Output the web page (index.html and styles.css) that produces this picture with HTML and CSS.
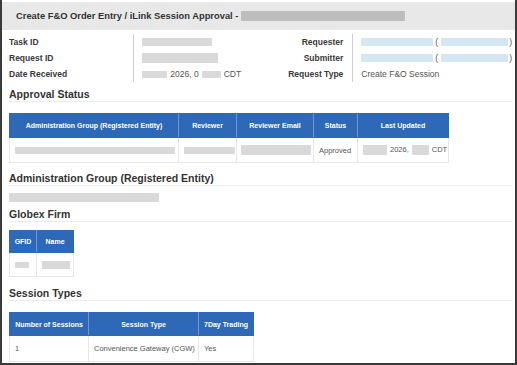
FILE: index.html
```html
<!DOCTYPE html>
<html>
<head>
  <meta charset="UTF-8">
  <title>Create F&amp;O Order Entry / iLink Session Approval</title>
  <link rel="stylesheet" href="styles.css">
</head>
<body>
  <div class="frame">
    <div class="titlebar">
      <span class="title">Create F&amp;O Order Entry / iLink Session Approval - </span>
      <span class="blur dark title-id"></span>
    </div>

    <div class="content">
      <div class="info">
        <div class="labels left">
          <div class="row">Task ID</div>
          <div class="row">Request ID</div>
          <div class="row">Date Received</div>
        </div>
        <div class="values left">
          <div class="row"><span class="blur task-id"></span></div>
          <div class="row"><span class="blur request-id"></span></div>
          <div class="row"><span class="blur date-a"></span><span class="gap">2026, 0</span><span class="blur date-b"></span><span class="gap">CDT</span></div>
        </div>
        <div class="labels right">
          <div class="row">Requester</div>
          <div class="row">Submitter</div>
          <div class="row">Request Type</div>
        </div>
        <div class="values right">
          <div class="row"><span class="blur link name"></span>(<span class="blur link mail"></span>)</div>
          <div class="row"><span class="blur link name"></span>(<span class="blur link mail"></span>)</div>
          <div class="row">Create F&amp;O Session</div>
        </div>
      </div>

      <h2 class="heading">Approval Status</h2>
      <table class="grid approvals">
        <colgroup>
          <col class="c-group"><col class="c-reviewer"><col class="c-email"><col class="c-status"><col class="c-updated">
        </colgroup>
        <tr>
          <th>Administration Group (Registered Entity)</th>
          <th>Reviewer</th>
          <th>Reviewer Email</th>
          <th>Status</th>
          <th>Last Updated</th>
        </tr>
        <tr>
          <td><span class="blur group-cell"></span></td>
          <td><span class="blur reviewer-cell"></span></td>
          <td><span class="blur email-cell"></span></td>
          <td>Approved</td>
          <td class="updated"><span class="blur upd-a"></span><span class="gap">2026,</span><span class="blur upd-b"></span><span class="gap">CDT</span></td>
        </tr>
      </table>

      <h2 class="heading">Administration Group (Registered Entity)</h2>
      <div class="blur group-value"></div>

      <h2 class="heading">Globex Firm</h2>
      <table class="grid firms">
        <colgroup><col class="c-gfid"><col class="c-name"></colgroup>
        <tr><th>GFID</th><th>Name</th></tr>
        <tr>
          <td><span class="blur gfid-cell"></span></td>
          <td><span class="blur firm-cell"></span></td>
        </tr>
      </table>

      <h2 class="heading sessions-title">Session Types</h2>
      <table class="grid sessions">
        <colgroup><col class="c-count"><col class="c-type"><col class="c-7day"></colgroup>
        <tr><th>Number of Sessions</th><th>Session Type</th><th>7Day Trading</th></tr>
        <tr><td>1</td><td>Convenience Gateway (CGW)</td><td>Yes</td></tr>
      </table>
    </div>
  </div>
</body>
</html>
```

FILE: styles.css
```css
body {
  margin: 0;
  font-family: "Liberation Sans", Arial, sans-serif;
  background: #fff;
}

.frame {
  width: 517px;
  height: 365px;
  box-sizing: border-box;
  border: 2px solid #3a3a3a;
  border-top: 0;
  padding-top: 2px;
  overflow: hidden;
}

.titlebar {
  height: 28px;
  background: #e8e8e8;
  display: flex;
  align-items: center;
  padding-left: 14px;
}

.title {
  font-size: 9.35px;
  font-weight: bold;
  color: #333;
  white-space: pre;
}

.content {
  padding: 0 3px 0 7px;
}

/* blurred-out values */
.blur {
  display: inline-block;
  background: #d9d9d9;
  border-radius: 1px;
  filter: blur(0.5px);
}

.blur.dark {
  background: #bdbdbd;
}

.blur.link {
  background: #d3e6f1;
  height: 8px;
}

.title-id { width: 164px; height: 10px; }

.info {
  display: flex;
  margin-top: 4px;
  font-size: 8.5px;
}

.row {
  height: 16px;
  display: flex;
  align-items: center;
  white-space: nowrap;
}

.labels {
  font-weight: bold;
  color: #3a3a3a;
}

.labels.left { width: 125px; }

.labels.right {
  width: 91px;
  padding-right: 9px;
}

.labels.right .row { justify-content: flex-end; }

.values {
  border-left: 1px solid #cfcfcf;
  padding-left: 8px;
  color: #555;
}

.values.left { width: 111px; }
.values.right { flex: 1; }

.gap { margin: 0 3px; }

.task-id { width: 70px; height: 8px; }
.request-id { width: 76px; height: 10px; }
.date-a { width: 25px; height: 7px; }
.date-b { width: 19px; height: 7px; }
.name { width: 72px; margin-right: 2px; }
.mail { width: 67px; margin: 0 1px 0 3px; }

.heading {
  margin: 6px 0 0;
  font-size: 10.5px;
  line-height: 13px;
  font-weight: bold;
  color: #333;
  border-bottom: 1px solid #ececec;
}

.heading.sessions-title { margin-top: 10px; }

.grid {
  border-collapse: collapse;
  table-layout: fixed;
  margin-top: 11px;
  font-size: 7.5px;
  color: #555;
}

.grid th {
  height: 21px;
  padding: 0 4px;
  background: #2d69b7;
  color: #fff;
  font-size: 7px;
  font-weight: bold;
  text-align: center;
  border: 1px solid #2d69b7;
  border-right-color: #6e96cf;
}

.grid th:last-child { border-right-color: #2d69b7; }

.grid td {
  height: 23px;
  padding: 0 5px;
  border: 1px solid #e6e6e6;
  white-space: nowrap;
}

.approvals { width: 439px; margin-bottom: 9px; }
.approvals th { height: 23px; }
.approvals td { height: 24px; }
.c-group { width: 169px; }
.c-reviewer { width: 58px; }
.c-email { width: 77px; }
.c-status { width: 44px; }
.c-updated { width: 91px; }

.group-cell { width: 160px; height: 7px; display: block; }
.reviewer-cell { width: 51px; height: 7px; display: block; }
.email-cell { width: 70px; height: 10px; display: block; margin-left: -1px; }
.updated { text-align: center; }
.upd-a { width: 24px; height: 10px; vertical-align: middle; }
.upd-b { width: 17px; height: 10px; vertical-align: middle; }

.group-value {
  display: block;
  width: 150px;
  height: 9px;
  margin: 7px 0 0;
}

.firms { width: 64px; margin-top: 8px; }
.firms th, .firms td { padding: 0 3px; }
.c-gfid { width: 27px; }
.c-name { width: 37px; }
.gfid-cell { width: 14px; height: 6px; display: block; margin-left: 2px; }
.firm-cell { width: 28px; height: 8px; display: block; margin-left: 2px; }

.sessions { width: 244px; }
.sessions th { height: 22px; }
.sessions td { height: 25px; }
.c-count { width: 79px; }
.c-type { width: 110px; }
.c-7day { width: 55px; }
```
